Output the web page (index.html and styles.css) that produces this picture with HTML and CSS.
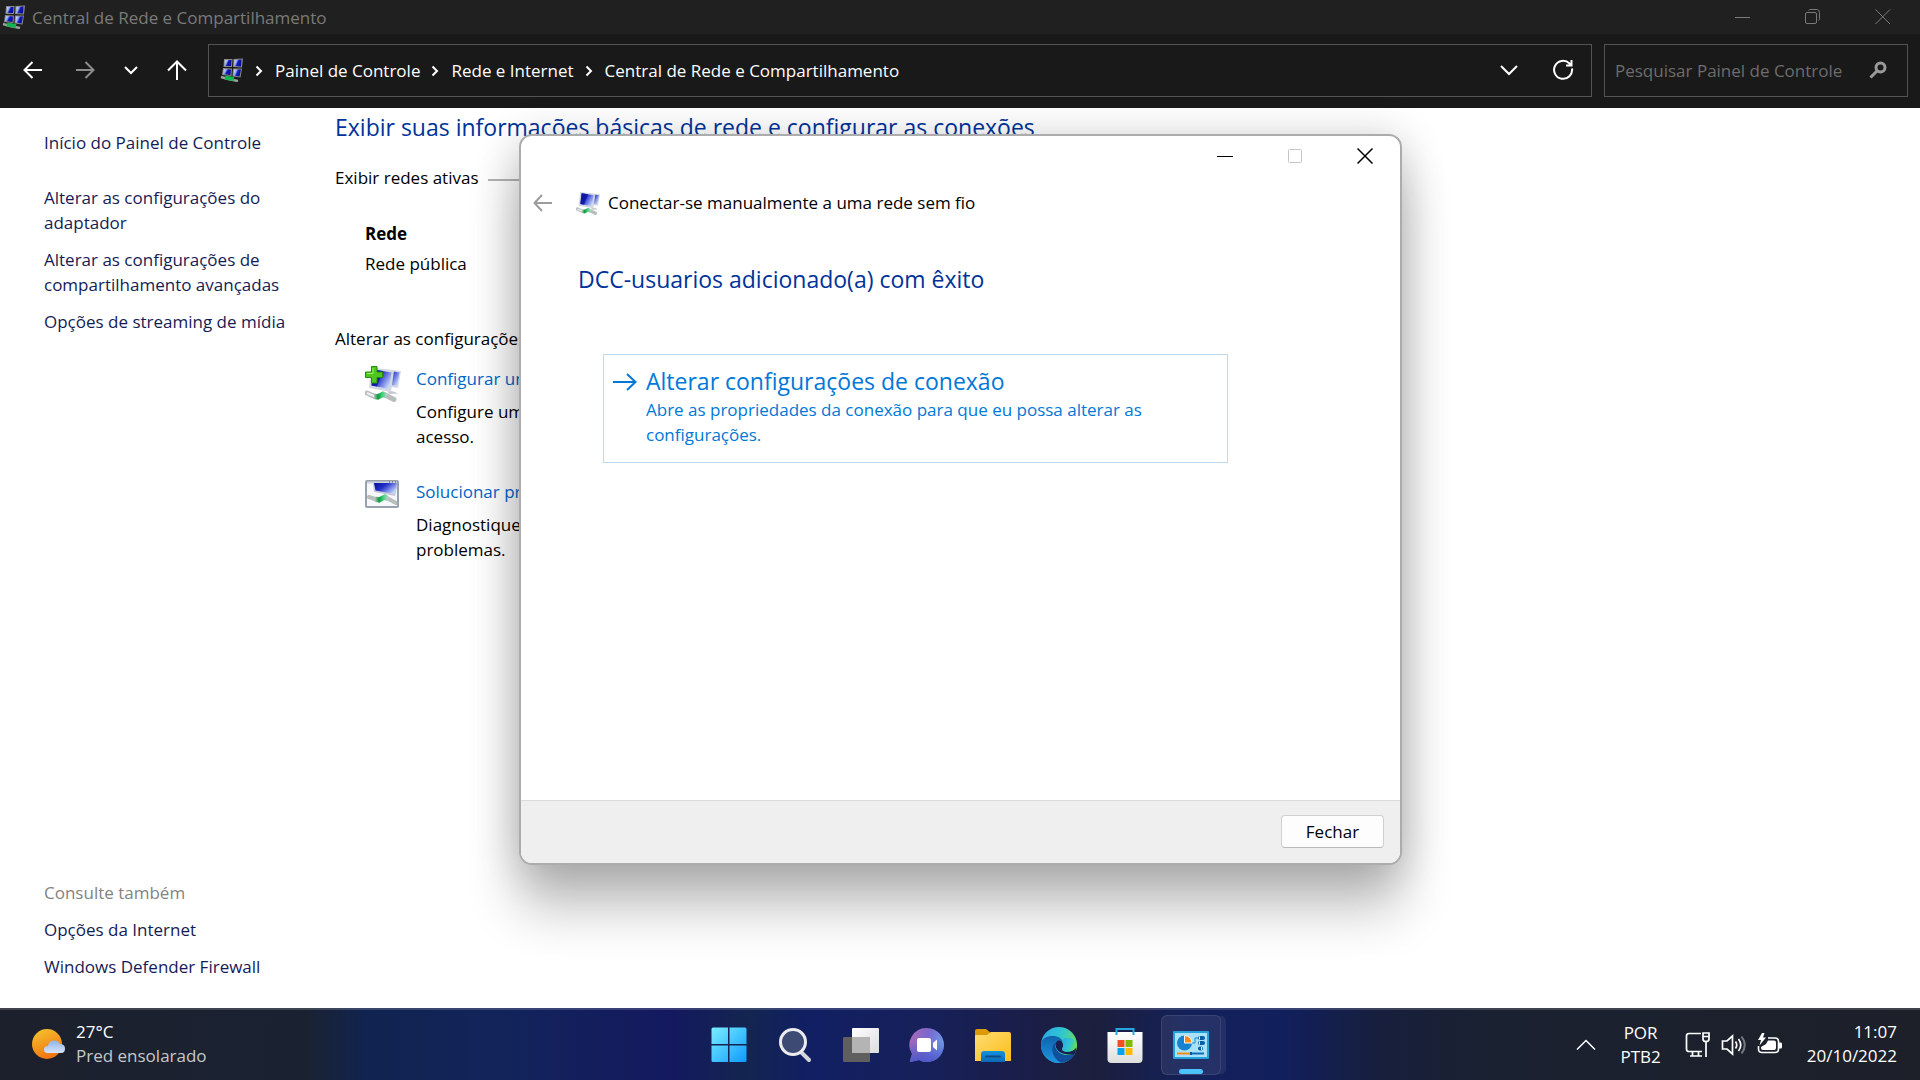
FILE: index.html
```html
<!DOCTYPE html>
<html lang="pt-BR">
<head>
    <meta charset="UTF-8">
    <meta name="viewport" content="width=device-width, initial-scale=1.0">
    <title>Central de Rede e Compartilhamento</title>
    <link rel="stylesheet" href="styles.css">
</head>
<body>
    <!-- shared icon shapes -->
    <svg class="defs" aria-hidden="true">
        <defs>
            <linearGradient id="screen" x1="0" y1="0" x2="1" y2="0.6">
                <stop offset="0" stop-color="#0a0f9c"/>
                <stop offset="0.45" stop-color="#2230c8"/>
                <stop offset="1" stop-color="#c3d4fa"/>
            </linearGradient>
            <linearGradient id="screenDark" x1="0" y1="0" x2="1" y2="0.4">
                <stop offset="0" stop-color="#e4ecff"/>
                <stop offset="0.4" stop-color="#8ea4ee"/>
                <stop offset="0.6" stop-color="#1019b8"/>
                <stop offset="1" stop-color="#0a0f9c"/>
            </linearGradient>
            <linearGradient id="pipe" x1="0" y1="0" x2="1" y2="0">
                <stop offset="0" stop-color="#b9c2c0"/>
                <stop offset="0.3" stop-color="#0d9c3c"/>
                <stop offset="0.65" stop-color="#3fd67c"/>
                <stop offset="1" stop-color="#c4cbca"/>
            </linearGradient>
            <symbol id="network-dark" viewBox="0 0 24 24">
                <path d="M4 1L12.500 1L12 9L3.500 9ZM13.500 1L23 .5L22 9.500L13 9ZM3 10L12 10.500L11.500 18L2 17ZM13 10.500L22 10.500L20.500 19.500L12.500 18.500Z" fill="#8a8a84"/>
                <path d="M5 2L11.500 2L11 8L4.500 8Z" fill="url(#screenDark)"/>
                <path d="M14.500 2L21.500 1.500L21 8.500L14 8Z" fill="url(#screenDark)"/>
                <path d="M4 11L11 11.500L10.500 17L3 16Z" fill="url(#screenDark)"/>
                <path d="M14 11.500L21 11.500L19.500 18.500L13.500 17.500Z" fill="url(#screenDark)"/>
                <path d="M1 19L8 21L18 23" fill="none" stroke="#9aa09c" stroke-width="2.500"/>
                <path d="M5 19.500L14 21" stroke="#12b552" stroke-width="4"/>
            </symbol>
            <symbol id="network" viewBox="0 0 36 36">
                <path d="M19 3 L36 5 L33 22 L18 20 Z" fill="#d5dae4"/>
                <path d="M21 4.500 L34.500 6.500 L32 20 L20 18 Z" fill="url(#screen)"/>
                <path d="M22 24 L30 26 L33 27.500 L24 28 Z" fill="#c6c9cd"/>
                <path d="M6 1 L29 5 L26 26 L4 22 Z" fill="#d3d8e2"/>
                <path d="M8.500 3.500 L26.500 6.500 L24 23 L6.500 19.500 Z" fill="url(#screen)"/>
                <path d="M8.500 3.500 L18 5 L12 20.500 L6.500 19.500 Z" fill="#0a0f9c" opacity="0.7"/>
                <path d="M2 27 L11 31 L19 28.500 L29 33.500" fill="none" stroke="#b7bebc" stroke-width="5" stroke-linecap="round"/>
                <path d="M2 27 L10 30.500" fill="none" stroke="#eef1f0" stroke-width="2"/>
                <path d="M9 30 L13 31 L18 28 L22 30" fill="none" stroke="url(#pipe)" stroke-width="5"/>
            </symbol>
        </defs>
    </svg>

    <header class="titlebar">
        <svg class="app-icon"><use href="#network-dark"/></svg>
        <span class="titlebar-text">Central de Rede e Compartilhamento</span>
        <div class="window-controls">
            <button aria-label="Minimizar"><svg width="16" height="16" viewBox="0 0 16 16"><path d="M0 8.500H15"/></svg></button>
            <button aria-label="Restaurar"><svg width="16" height="16" viewBox="0 0 16 16"><rect x="0.500" y="3.500" width="11" height="11" rx="1.500"/><path d="M3.500 1.500Q4 .5 5.500 .5H11.500Q14.500 .5 14.500 3.500V9.500Q14.500 11 13.500 11.500"/></svg></button>
            <button aria-label="Fechar janela"><svg width="16" height="16" viewBox="0 0 16 16"><path d="M.5 .5L15 15M15 .5L.5 15"/></svg></button>
        </div>
    </header>

    <nav class="toolbar">
        <div class="nav-buttons">
            <button aria-label="Voltar"><svg width="20" height="20" viewBox="0 0 20 20"><path d="M19 10H2M9.500 2L1.500 10L9.500 18"/></svg></button>
            <button aria-label="Avançar" class="dim"><svg width="20" height="20" viewBox="0 0 20 20"><path d="M1 10H18M10.500 2L18.500 10L10.500 18"/></svg></button>
            <button aria-label="Locais recentes" class="recent"><svg width="14" height="20" viewBox="0 0 14 20"><path d="M1 7L7 13L13 7"/></svg></button>
            <button aria-label="Acima"><svg width="20" height="20" viewBox="0 0 20 20"><path d="M10 20V1.500M1 10.500L10 1.500L19 10.500"/></svg></button>
        </div>
        <div class="address">
            <svg class="address-icon"><use href="#network-dark"/></svg>
            <svg class="crumb-sep" viewBox="0 0 8 12"><path d="M1.500 1.500L6 6L1.500 10.500"/></svg>
            <a href="#">Painel de Controle</a>
            <svg class="crumb-sep" viewBox="0 0 8 12"><path d="M1.500 1.500L6 6L1.500 10.500"/></svg>
            <a href="#">Rede e Internet</a>
            <svg class="crumb-sep" viewBox="0 0 8 12"><path d="M1.500 1.500L6 6L1.500 10.500"/></svg>
            <a href="#">Central de Rede e Compartilhamento</a>
            <div class="address-buttons">
                <button aria-label="Histórico"><svg width="18" height="20" viewBox="0 0 18 20"><path d="M1 6L9 14L17 6"/></svg></button>
                <button aria-label="Atualizar"><svg width="22" height="22" viewBox="0 0 22 22"><path d="M20 9.500A9 9 0 1 1 17.500 4.500L19 6M19.500 1V6.500H14"/></svg></button>
            </div>
        </div>
        <div class="search">
            <input type="text" aria-label="Pesquisar Painel de Controle" placeholder="Pesquisar Painel de Controle">
            <svg width="18" height="18" viewBox="0 0 18 18"><circle cx="11.500" cy="6.500" r="4.500"/><path d="M8 10L1.500 16.500"/></svg>
        </div>
    </nav>

    <div class="content">
        <aside class="sidebar">
            <a class="home" href="#">Início do Painel de Controle</a>
            <div class="tasks">
                <a href="#">Alterar as configurações do adaptador</a>
                <a href="#">Alterar as configurações de compartilhamento avançadas</a>
                <a href="#">Opções de streaming de mídia</a>
            </div>
            <div class="tasks see-also">
                <span class="muted">Consulte também</span>
                <a href="#">Opções da Internet</a>
                <a href="#">Windows Defender Firewall</a>
            </div>
        </aside>

        <main class="main">
            <h1>Exibir suas informações básicas de rede e configurar as conexões</h1>
            <h2 class="section-title">Exibir redes ativas</h2>
            <div class="active-network">
                <strong>Rede</strong>
                <span>Rede pública</span>
            </div>
            <h2 class="section-title">Alterar as configurações de rede</h2>
            <div class="options">
                <div class="option">
                    <svg class="option-icon" viewBox="0 0 36 36">
                        <use href="#network"/>
                        <path d="M6.500 .5H12V6H17.500V11.500H12V17H6.500V11.500H.5V6H6.500Z" fill="#4fc61c" stroke="#258a0c"/>
                        <path d="M8 2V7.500H2" fill="none" stroke="#a6ec6e"/>
                    </svg>
                    <div>
                        <a href="#">Configurar uma rede</a>
                        <p>Configure um ponto de<br>acesso.</p>
                    </div>
                </div>
                <div class="option">
                    <svg class="option-icon" viewBox="0 0 36 36">
                        <defs><clipPath id="pane"><rect x="2" y="4" width="30" height="23"/></clipPath></defs>
                        <rect x="1" y="2" width="32" height="26" rx="1" fill="#f6f8fb" stroke="#98a1ae" stroke-width="2"/>
                        <path d="M2 3.500H32" stroke="#cdd5df" stroke-width="2"/>
                        <path d="M24 3H25M27 3H28M30 3H31" stroke="#4c5665"/>
                        <g clip-path="url(#pane)">
                            <path d="M8 4H33L30 17L9 13Z" fill="#c5cad6"/>
                            <path d="M9 4H32L29.500 15L10.500 11.500Z" fill="url(#screen)"/>
                            <path d="M4 18L13 21L20 18L31 24" fill="none" stroke="#b7bebc" stroke-width="4" stroke-linecap="round"/>
                            <path d="M10 20L14 21L20 18L23 20" fill="none" stroke="url(#pipe)" stroke-width="5"/>
                        </g>
                    </svg>
                    <div>
                        <a href="#">Solucionar problemas</a>
                        <p>Diagnostique e repare<br>problemas.</p>
                    </div>
                </div>
            </div>
        </main>
    </div>

    <section class="dialog" role="dialog" aria-labelledby="dialogTitle">
        <div class="dialog-controls">
            <button aria-label="Minimizar"><svg width="16" height="16" viewBox="0 0 16 16"><path d="M0 8.500H16"/></svg></button>
            <button aria-label="Maximizar" disabled><svg width="16" height="16" viewBox="0 0 16 16"><rect x="1.500" y="1.500" width="13" height="13" rx="1"/></svg></button>
            <button aria-label="Fechar janela"><svg width="16" height="16" viewBox="0 0 16 16"><path d="M.5 .5L15.500 15.500M15.500 .5L.5 15.500" stroke-width="1.500"/></svg></button>
        </div>
        <div class="dialog-header">
            <button aria-label="Voltar"><svg width="20" height="20" viewBox="0 0 20 20"><path d="M19 10H2M9 2L1.500 10L9 18"/></svg></button>
            <svg class="dialog-icon"><use href="#network"/></svg>
            <span id="dialogTitle">Conectar-se manualmente a uma rede sem fio</span>
        </div>
        <div class="dialog-body">
            <h2>DCC-usuarios adicionado(a) com êxito</h2>
            <button class="command-link">
                <svg width="24" height="20" viewBox="0 0 24 20"><path d="M0 10H22M14 2L22.500 10L14 18"/></svg>
                <span class="command-text">
                    <span class="command-title">Alterar configurações de conexão</span>
                    <span>Abre as propriedades da conexão para que eu possa alterar as configurações.</span>
                </span>
            </button>
        </div>
        <div class="dialog-footer">
            <button>Fechar</button>
        </div>
    </section>

    <footer class="taskbar">
        <button class="weather">
            <svg width="34" height="32" viewBox="0 0 34 32">
                <defs>
                    <linearGradient id="sun" x1="0.2" y1="0" x2="0.6" y2="1"><stop offset="0" stop-color="#f5c22e"/><stop offset="1" stop-color="#f0700f"/></linearGradient>
                    <linearGradient id="cloud" x1="0" y1="0" x2="0" y2="1"><stop offset="0" stop-color="#8fb4ec"/><stop offset="1" stop-color="#d6e5fb"/></linearGradient>
                </defs>
                <circle cx="15" cy="16" r="15" fill="url(#sun)"/>
                <path d="M16 25Q12 25 12 21.500Q12 18 16 18Q17 12.500 22 12.500Q26.500 12.500 28 16Q33 16 33 20.500Q33 25 29 25Z" fill="url(#cloud)"/>
            </svg>
            <span class="weather-text">
                <span>27°C</span>
                <span class="weather-desc">Pred ensolarado</span>
            </span>
        </button>

        <div class="apps">
            <button aria-label="Iniciar">
                <svg width="36" height="36" viewBox="0 0 36 36">
                    <defs><linearGradient id="win" gradientUnits="userSpaceOnUse" x1="0" y1="0" x2="36" y2="36"><stop offset="0" stop-color="#7cf0ff"/><stop offset="1" stop-color="#0c98ff"/></linearGradient></defs>
                    <path d="M2 .5H17V17H.5V2Q.5 .5 2 .5ZM18.500 .5H34Q35.500 .5 35.500 2V17H18.500ZM.5 18.500H17V35H2Q.5 35 .5 33.500ZM18.500 18.500H35.500V33.500Q35.500 35 34 35H18.500Z" fill="url(#win)"/>
                </svg>
            </button>
            <button aria-label="Pesquisar">
                <svg width="36" height="36" viewBox="0 0 36 36">
                    <path d="M25 26L32 33" stroke="#d4d6da" stroke-width="4" stroke-linecap="round"/>
                    <circle cx="16" cy="15" r="12.500" fill="#3c4a74" stroke="#ececee" stroke-width="3"/>
                </svg>
            </button>
            <button aria-label="Visão de tarefas">
                <svg width="36" height="36" viewBox="0 0 36 36">
                    <defs><linearGradient id="pale" x1="0" y1="0" x2="1" y2="1"><stop offset="0" stop-color="#fff"/><stop offset="1" stop-color="#dcdcdc"/></linearGradient></defs>
                    <rect x="9" y="1" width="27" height="25" rx="1" fill="url(#pale)"/>
                    <rect x="0" y="10" width="27" height="25" rx="1" fill="#5f5f60"/>
                    <rect x="9" y="10" width="18" height="16" fill="#b4b4b4"/>
                </svg>
            </button>
            <button aria-label="Chat">
                <svg width="36" height="36" viewBox="0 0 36 36">
                    <defs><linearGradient id="chat" x1="0" y1="0.2" x2="1" y2="0.5"><stop offset="0" stop-color="#a869b4"/><stop offset="0.5" stop-color="#7a68cf"/><stop offset="1" stop-color="#6b9be8"/></linearGradient>
                    <linearGradient id="chat2" x1="0" y1="0" x2="0" y2="1"><stop offset="0.4" stop-color="#5059c9" stop-opacity="0"/><stop offset="1" stop-color="#5059c9"/></linearGradient></defs>
                    <path d="M18 1A17 17 0 1 1 10 33L1.500 35Q.5 35 1 33.500L3 27A17 17 0 0 1 18 1Z" fill="url(#chat)"/>
                    <path d="M18 1A17 17 0 1 1 10 33L1.500 35Q.5 35 1 33.500L3 27A17 17 0 0 1 18 1Z" fill="url(#chat2)"/>
                    <rect x="8" y="11" width="14" height="14" rx="2" fill="#fff"/>
                    <path d="M24 16L28 12.500V23.500L24 20Z" fill="#fff"/>
                </svg>
            </button>
            <button aria-label="Explorador de Arquivos">
                <svg width="36" height="36" viewBox="0 0 36 36">
                    <defs><linearGradient id="folder" x1="0" y1="0" x2="1" y2="1"><stop offset="0" stop-color="#ffdc72"/><stop offset="1" stop-color="#fbbd1a"/></linearGradient>
                    <linearGradient id="tray" x1="0" y1="0" x2="0" y2="1"><stop offset="0" stop-color="#1593dd"/><stop offset="1" stop-color="#0a69b8"/></linearGradient></defs>
                    <path d="M0 4Q0 2 2 2H11L16 6H22V12H0Z" fill="#dc9a07"/>
                    <path d="M0 9Q0 8 2 8H12L16 5H34Q36 5 36 7V34H0Z" fill="url(#folder)"/>
                    <path d="M6 35V27Q6 24 9 24H27Q30 24 30 27V35Z" fill="url(#tray)"/>
                    <path d="M11 29.500H25" stroke="#0a4c85" stroke-width="2" stroke-linecap="round"/>
                </svg>
            </button>
            <button aria-label="Edge">
                <svg width="36" height="36" viewBox="0 0 36 36">
                    <defs>
                        <linearGradient id="edgeTop" x1="0" y1="0.3" x2="1" y2="0.6"><stop offset="0" stop-color="#2ea9e3"/><stop offset="0.5" stop-color="#2fc6d0"/><stop offset="1" stop-color="#6ae04e"/></linearGradient>
                        <linearGradient id="edgeLeft" x1="0.3" y1="0" x2="0.3" y2="1"><stop offset="0" stop-color="#0f62ab"/><stop offset="1" stop-color="#1d95e3"/></linearGradient>
                    </defs>
                    <circle cx="18" cy="18" r="18" fill="url(#edgeTop)"/>
                    <path d="M0 18C0 10 8 8.500 13 9C18 9.500 21 12 22 15C16 12 13 18 15 22C18 29 26 30 33.500 27C30 33 25 36 18 36C8 36 0 28 0 18Z" fill="url(#edgeLeft)"/>
                    <path d="M15 15C9 19 10 30 20 35.800C27 35 31 32 33.500 27.500C33 26.500 32.500 26.500 31.500 27C24 30 17 26 14.500 21C13.500 19 14 16.500 15 15Z" fill="#0f4f9c"/>
                    <path d="M17 13.500C21 13 23 17 22 20C20.500 22 21 24 24 24.500C28 25.500 33 24 35 20.500C35.500 23 34.500 26 33 27.500C26 28 17 27 14.800 20C14 17 15 14.500 17 13.500Z" fill="#161f52"/>
                    <path d="M22 20C20.500 22 21 24 24 24.500C29 25.300 36 23 36 17.500C35 12 31 11 26 11C22 11 21 13 22 15Z" fill="url(#edgeTop)"/>
                </svg>
            </button>
            <button aria-label="Microsoft Store">
                <svg width="36" height="36" viewBox="0 0 36 36">
                    <defs><linearGradient id="bag" x1="0" y1="0" x2="0" y2="1"><stop offset="0" stop-color="#fff"/><stop offset="1" stop-color="#dedede"/></linearGradient></defs>
                    <path d="M.5 5H35.500V32Q35.500 36 31.500 36H4.500Q.5 36 .5 32Z" fill="url(#bag)"/>
                    <path d="M9.500 8V2H26.500V8" fill="none" stroke="#22a7e0" stroke-width="2"/>
                    <path d="M10.500 13H17.500V20H10.500Z" fill="#f25022"/>
                    <path d="M18.500 13H25.500V20H18.500Z" fill="#7fba00"/>
                    <path d="M10.500 21H17.500V28H10.500Z" fill="#00a4ef"/>
                    <path d="M18.500 21H25.500V28H18.500Z" fill="#ffb900"/>
                </svg>
            </button>
            <button aria-label="Painel de Controle" class="active">
                <svg width="36" height="28" viewBox="0 0 36 28">
                    <rect width="36" height="28" rx="1" fill="#22a3dc"/>
                    <rect x="2" y="2" width="32" height="24" fill="#a9e2f8"/>
                    <circle cx="11.500" cy="12" r="7.500" fill="#1683d0"/>
                    <path d="M11.500 12V4.500A7.500 7.500 0 0 1 19 12Z" fill="#f78b12" stroke="#fff"/>
                    <path d="M19 12H22V7H25" fill="none" stroke="#168bcf"/>
                    <path d="M27 7H30M27 12H30M27 17.500H28" stroke="#0b5ca6" stroke-width="4" stroke-linecap="round"/>
                    <path d="M26 7H27M26 12H27M28 17.500H29" stroke="#fff" stroke-width="3"/>
                    <path d="M4 22.500H17" stroke="#f78b12" stroke-width="2"/>
                    <path d="M18 22.500H31" stroke="#0f6cbd" stroke-width="2"/>
                    <path d="M18 21V24" stroke="#0b5394" stroke-width="2"/>
                </svg>
            </button>
        </div>

        <div class="tray">
            <button aria-label="Ícones ocultos"><svg width="20" height="12" viewBox="0 0 20 12"><path d="M1 10.500L10 1.500L19 10.500" stroke-width="1.500"/></svg></button>
            <button class="language"><span>POR</span><span>PTB2</span></button>
            <button class="status" aria-label="Rede, volume e bateria">
                <svg width="26" height="26" viewBox="0 0 26 26"><path d="M16 1.500H4Q1.500 1.500 1.500 4V17Q1.500 19.500 4 19.500H17M7.500 20V24M13.500 20V24M5 24H17M18 1H24V7Q24 9.500 21 9.500Q18 9.500 18 7ZM18 4.500H24M21 10V25" stroke-width="1.700"/></svg>
                <svg width="26" height="26" viewBox="0 0 26 26"><path d="M1.500 9H6L11.500 4V22L6 17H1.500ZM14.500 9.500Q17 13 14.500 16.500M17.500 7Q22 13 17.500 19" stroke-width="1.700"/><path class="faint" d="M20.500 4.500Q27 13 20.500 21.500"/></svg>
                <svg width="26" height="26" viewBox="0 0 26 26"><path d="M11 6H18Q21.500 6 21.500 9.500V17Q21.500 20.500 18 20.500H5Q1.500 20.500 1.500 17V14" stroke-width="1.600"/><path class="solid" d="M11 8.500H17Q19 8.500 19 10.500V16Q19 18 17 18H6Q4 18 4 16V15L9 12ZM22 10.500H24Q25 10.500 25 12V15Q25 16.500 24 16.500H22ZM5 1L1 8H4L2.500 13.500L9 5.500H6L7.500 1Z"/></svg>
            </button>
            <button class="clock"><span>11:07</span><span>20/10/2022</span></button>
        </div>
    </footer>
</body>
</html>
```
FILE: styles.css
```css
* {
    box-sizing: border-box;
}
body {
    margin: 0;
    min-height: 100vh;
    display: flex;
    flex-direction: column;
    font-family: "Open Sans", "Noto Sans", sans-serif;
    font-size: 17px;
    line-height: 25px;
    color: #000;
    background: #fff;
}
button {
    padding: 0;
    border: none;
    background: none;
    font: inherit;
    color: inherit;
    display: flex;
    align-items: center;
    justify-content: center;
}
a {
    text-decoration: none;
}
h1, h2, p {
    margin: 0;
    font-weight: normal;
}
svg {
    flex-shrink: 0;
}
.defs {
    position: absolute;
    width: 0;
    height: 0;
}

/* main window chrome */
.titlebar {
    display: flex;
    align-items: center;
    height: 34px;
    padding: 0 2px;
    background: #202020;
    color: #7a7a7a;
}
.app-icon {
    width: 24px;
    height: 24px;
    margin-right: 6px;
}
.window-controls {
    display: flex;
    margin-left: auto;
}
.window-controls button {
    width: 70px;
    height: 34px;
}
.window-controls svg {
    fill: none;
    stroke: #7a7a7a;
}
.toolbar {
    display: flex;
    align-items: center;
    gap: 12px;
    height: 74px;
    padding: 0 12px 2px 0;
    background: #191919;
    color: #fff;
}
.nav-buttons {
    display: flex;
    gap: 32px;
    padding: 0 9px 0 23px;
}
.nav-buttons svg,
.address-buttons svg {
    fill: none;
    stroke: #fff;
    stroke-width: 2;
}
.nav-buttons .dim svg {
    stroke: #8c8c8c;
}
.nav-buttons .recent {
    margin: 0 -3px;
}
.address {
    flex: 1;
    display: flex;
    align-items: center;
    height: 53px;
    padding: 0 17px 0 11px;
    border: 1px solid #535353;
}
.address a {
    color: #fff;
}
.address-icon {
    width: 24px;
    height: 24px;
}
.crumb-sep {
    width: 8px;
    height: 12px;
    margin: 2px 12px 0 11px;
    fill: none;
    stroke: #fff;
    stroke-width: 2;
}
.address-buttons {
    display: flex;
    align-items: center;
    gap: 34px;
    margin-left: auto;
}
.search {
    display: flex;
    align-items: center;
    width: 304px;
    height: 53px;
    padding: 0 20px 0 10px;
    border: 1px solid #535353;
}
.search input {
    flex: 1;
    min-width: 0;
    padding: 0;
    border: none;
    outline: none;
    background: none;
    font: inherit;
    color: #fff;
}
.search input::placeholder {
    color: #6d6d6d;
    opacity: 1;
}
.search svg {
    fill: none;
    stroke: #9a9a9a;
    stroke-width: 3;
}

/* page */
.content {
    flex: 1;
    display: flex;
}
.sidebar {
    display: flex;
    flex-direction: column;
    width: 335px;
    padding: 22px 40px 29px 44px;
}
.sidebar a {
    color: #151c55;
}
.home {
    margin-bottom: 30px;
}
.tasks {
    display: flex;
    flex-direction: column;
    gap: 12px;
}
.see-also {
    margin-top: auto;
}
.muted {
    color: #838383;
}
.main {
    flex: 1;
    max-width: 1000px;
    padding-top: 3px;
}
.main h1,
.dialog h2 {
    font-size: 23px;
    line-height: 32px;
    color: #003399;
}
.section-title {
    display: flex;
    align-items: center;
    gap: 9px;
    margin-top: 22px;
    font-size: 17px;
}
.section-title::after {
    content: "";
    flex: 1;
    height: 2px;
    margin-top: 4px;
    background: #b4b4b4;
}
.active-network {
    display: flex;
    flex-direction: column;
    gap: 5px;
    padding: 31px 0 28px 30px;
}
.options {
    display: flex;
    flex-direction: column;
    gap: 30px;
    padding: 15px 0 0 30px;
}
.option {
    display: flex;
    gap: 15px;
}
.option a {
    color: #0066cc;
}
.option p {
    margin-top: 8px;
}
.option-icon {
    width: 36px;
    height: 36px;
}

/* wizard window */
.dialog {
    position: absolute;
    top: 134px;
    left: 519px;
    display: flex;
    flex-direction: column;
    width: 883px;
    height: 731px;
    border: 2px solid #acacac;
    border-radius: 13px;
    background: #fff;
    box-shadow: 0 44px 52px rgba(0, 0, 0, 0.24), 0 4px 44px rgba(0, 0, 0, 0.2);
    overflow: hidden;
}
.dialog-controls {
    display: flex;
    justify-content: flex-end;
}
.dialog-controls button {
    width: 70px;
    height: 40px;
}
.dialog-controls svg {
    fill: none;
    stroke: #000;
}
.dialog-controls button:disabled svg {
    stroke: #c4c4c4;
}
.dialog-header {
    display: flex;
    align-items: center;
    margin-top: 14px;
    padding-left: 12px;
}
.dialog-header button svg {
    fill: none;
    stroke: #9c9c9c;
    stroke-width: 2;
}
.dialog-icon {
    width: 24px;
    height: 24px;
    margin: 0 8px 0 23px;
}
.dialog-body {
    flex: 1;
    padding: 48px 172px 0 57px;
}
.command-link {
    align-items: flex-start;
    justify-content: flex-start;
    gap: 9px;
    width: calc(100% - 25px);
    margin: 59px 0 0 25px;
    padding: 10px 9px 15px;
    border: 1px solid #b9dcf3;
    color: #0078d7;
    text-align: left;
}
.command-link svg {
    margin-top: 7px;
    fill: none;
    stroke: #0078d7;
    stroke-width: 2;
}
.command-text {
    display: flex;
    flex-direction: column;
    max-width: 520px;
}
.command-title {
    font-size: 23px;
    line-height: 32px;
}
.dialog-footer {
    display: flex;
    justify-content: flex-end;
    padding: 14px 16px 15px;
    border-top: 1px solid #dcdcdc;
    background: #efefef;
}
.dialog-footer button {
    width: 103px;
    height: 33px;
    border: 1px solid #d0d0d0;
    border-bottom-color: #bababa;
    border-radius: 4px;
    background: #fdfdfd;
}

/* taskbar */
.taskbar {
    position: relative;
    display: grid;
    grid-template-columns: 1fr auto 1fr;
    align-items: center;
    height: 72px;
    border-top: 2px solid rgba(255, 255, 255, 0.16);
    background: linear-gradient(90deg, #1c202c 0%, #1a2232 16%, #11234f 19%, #12245a 26%, #14195f 35%, #132550 39%, #111f63 42%, #16205a 48%, #191e4a 53%, #1c1f3c 57%, #13205a 62%, #111f5c 67%, #171f3c 72%, #1a2130 78%, #1d2029 100%) border-box;
    color: #fff;
}
.weather {
    justify-self: start;
    gap: 10px;
    padding: 0 0 2px 32px;
}
.weather-text {
    display: flex;
    flex-direction: column;
    line-height: 24px;
    text-align: left;
}
.weather-desc {
    color: #c6c8cb;
}
.apps {
    display: flex;
    align-items: center;
    gap: 6px;
}
.apps button {
    width: 60px;
    height: 60px;
}
.apps .active {
    position: relative;
    border: 1px solid rgba(255, 255, 255, 0.1);
    border-radius: 6px;
    background: rgba(255, 255, 255, 0.08);
    box-shadow: 6px 0 0 -1px rgba(255, 255, 255, 0.07);
}
.apps .active::after {
    content: "";
    position: absolute;
    bottom: 0;
    left: 17px;
    width: 24px;
    height: 5px;
    border-radius: 3px;
    background: #4cc2ff;
}
.tray {
    display: flex;
    align-items: center;
    justify-self: end;
    gap: 24px;
    padding-right: 23px;
}
.tray svg {
    fill: none;
    stroke: #fff;
    stroke-width: 2;
}
.tray .solid {
    fill: #fff;
    stroke: none;
}
.tray .faint {
    opacity: 0.4;
}
.status {
    gap: 10px;
}
.language,
.clock {
    flex-direction: column;
    line-height: 24px;
}
.clock {
    align-items: flex-end;
    padding-bottom: 2px;
}
```
